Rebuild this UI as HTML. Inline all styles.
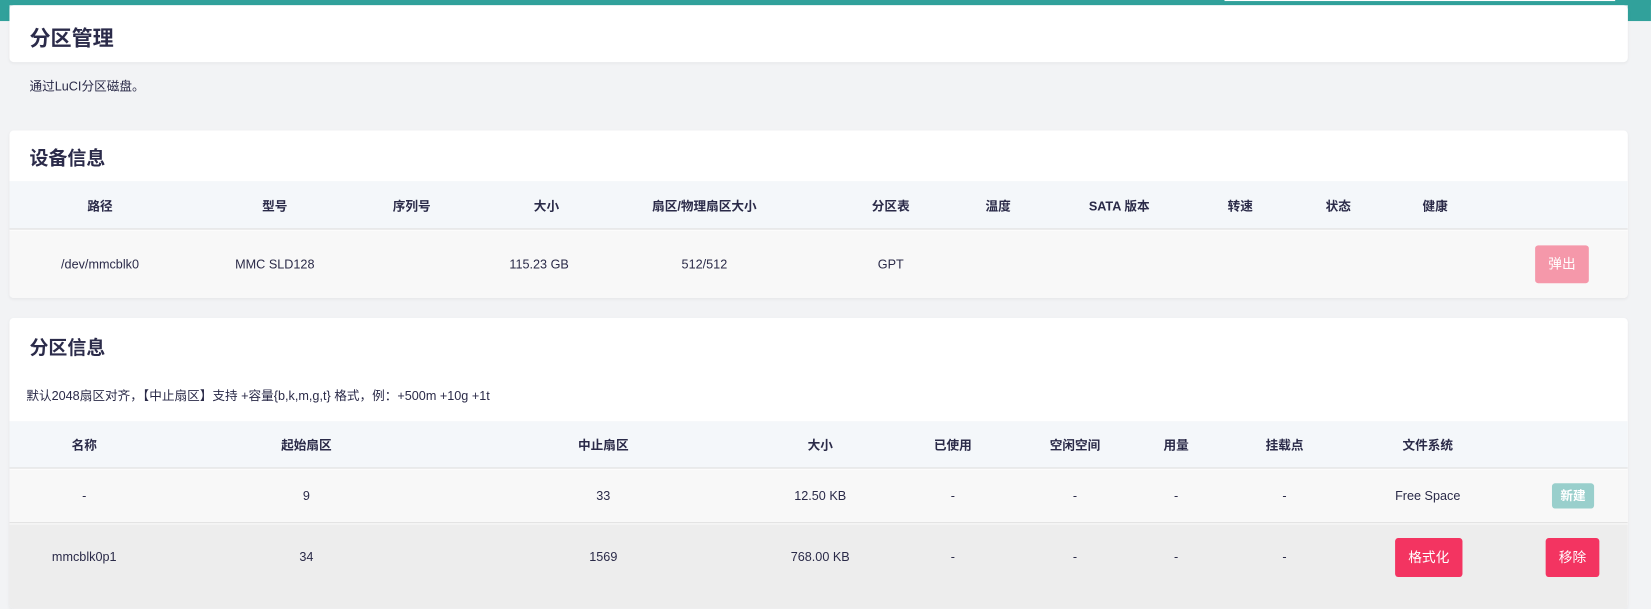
<!DOCTYPE html>
<html><head><meta charset="utf-8"><style>
*{margin:0;padding:0;box-sizing:border-box}
body{width:1651px;height:578px;overflow:hidden;background:#f2f3f5;font-family:"Liberation Sans","Noto Sans CJK SC",sans-serif;color:#2a2a48;position:relative}
#w{position:absolute;left:0;top:0;width:1568px;height:549px;transform:scale(1.0529);transform-origin:0 0}
.abs{position:absolute}
.c{position:absolute;transform:translateX(-50%);white-space:nowrap;font-size:12px}
.h{font-weight:bold;font-size:12px}
.card{position:absolute;left:9px;width:1537px;background:#fff;border-radius:4px;box-shadow:0 1px 3px rgba(0,0,0,.05)}
.title{position:absolute;left:19px;font-size:20px;font-weight:bold;color:#2b2b4a}
.btn{position:absolute;color:#fff;font-size:13px;text-align:center;border-radius:3px}
</style></head><body><div id="w">
<div class="abs" style="left:0;top:0;width:1568px;height:5px;background:#31a19b"></div>
<div class="abs" style="left:0;top:0;width:9px;height:20px;background:#31a19b"></div>
<div class="abs" style="left:1546px;top:0;width:22px;height:20px;background:#31a19b"></div>
<div class="abs" style="left:1163px;top:0;width:371px;height:1px;background:#fff"></div>

<div class="card" style="top:5px;height:54px"><div class="title" style="top:15px">分区管理</div></div>
<div class="abs" style="left:28px;top:73px;font-size:12px">通过LuCI分区磁盘。</div>

<div class="card" style="top:124px;height:159px;overflow:hidden">
 <div class="title" style="top:12px;font-size:18px">设备信息</div>
 <div class="abs" style="left:0;top:48px;width:1537px;height:46px;background:#f4f7fa;border-bottom:1px solid #dcdcdc"></div>
 <div class="abs" style="left:0;top:95px;width:1537px;height:64px;background:#f8f8f8"></div>
</div>
<div class="c h" style="left:95px;top:187px">路径</div>
<div class="c h" style="left:261px;top:187px">型号</div>
<div class="c h" style="left:391px;top:187px">序列号</div>
<div class="c h" style="left:519px;top:187px">大小</div>
<div class="c h" style="left:669px;top:187px">扇区/物理扇区大小</div>
<div class="c h" style="left:846px;top:187px">分区表</div>
<div class="c h" style="left:948px;top:187px">温度</div>
<div class="c h" style="left:1063px;top:187px">SATA 版本</div>
<div class="c h" style="left:1178px;top:187px">转速</div>
<div class="c h" style="left:1271px;top:187px">状态</div>
<div class="c h" style="left:1363px;top:187px">健康</div>
<div class="c" style="left:95px;top:244px">/dev/mmcblk0</div>
<div class="c" style="left:261px;top:244px">MMC SLD128</div>
<div class="c" style="left:512px;top:244px">115.23 GB</div>
<div class="c" style="left:669px;top:244px">512/512</div>
<div class="c" style="left:846px;top:244px">GPT</div>
<div class="btn" style="left:1458px;top:233px;width:51px;height:36px;line-height:36px;background:#f598aa">弹出</div>

<div class="card" style="top:302px;height:276px;overflow:hidden">
 <div class="title" style="top:14px;font-size:18px">分区信息</div>
 <div class="abs" style="left:16px;top:65px;font-size:12px">默认2048扇区对齐，【中止扇区】支持 +容量{b,k,m,g,t} 格式，例：+500m +10g +1t</div>
 <div class="abs" style="left:0;top:98px;width:1537px;height:45px;background:#f4f7fa;border-bottom:1px solid #dcdcdc"></div>
 <div class="abs" style="left:0;top:144px;width:1537px;height:51px;background:#f8f8f8;border-bottom:1px solid #dcdcdc"></div>
 <div class="abs" style="left:0;top:196px;width:1537px;height:81px;background:#ededed"></div>
</div>
<div class="c h" style="left:80px;top:414px">名称</div>
<div class="c h" style="left:291px;top:414px">起始扇区</div>
<div class="c h" style="left:573px;top:414px">中止扇区</div>
<div class="c h" style="left:779px;top:414px">大小</div>
<div class="c h" style="left:905px;top:414px">已使用</div>
<div class="c h" style="left:1021px;top:414px">空闲空间</div>
<div class="c h" style="left:1117px;top:414px">用量</div>
<div class="c h" style="left:1220px;top:414px">挂载点</div>
<div class="c h" style="left:1356px;top:414px">文件系统</div>
<div class="c" style="left:80px;top:464px">-</div>
<div class="c" style="left:291px;top:464px">9</div>
<div class="c" style="left:573px;top:464px">33</div>
<div class="c" style="left:779px;top:464px">12.50 KB</div>
<div class="c" style="left:905px;top:464px">-</div>
<div class="c" style="left:1021px;top:464px">-</div>
<div class="c" style="left:1117px;top:464px">-</div>
<div class="c" style="left:1220px;top:464px">-</div>
<div class="c" style="left:1356px;top:464px">Free Space</div>
<div class="btn" style="left:1474px;top:459px;width:40px;height:24px;line-height:24px;background:#99cfcc;font-weight:bold;font-size:12px">新建</div>
<div class="c" style="left:80px;top:522px">mmcblk0p1</div>
<div class="c" style="left:291px;top:522px">34</div>
<div class="c" style="left:573px;top:522px">1569</div>
<div class="c" style="left:779px;top:522px">768.00 KB</div>
<div class="c" style="left:905px;top:522px">-</div>
<div class="c" style="left:1021px;top:522px">-</div>
<div class="c" style="left:1117px;top:522px">-</div>
<div class="c" style="left:1220px;top:522px">-</div>
<div class="btn" style="left:1325px;top:511px;width:64px;height:37px;line-height:37px;background:#f33461">格式化</div>
<div class="btn" style="left:1468px;top:511px;width:51px;height:37px;line-height:37px;background:#f33461">移除</div>
</div></body></html>
